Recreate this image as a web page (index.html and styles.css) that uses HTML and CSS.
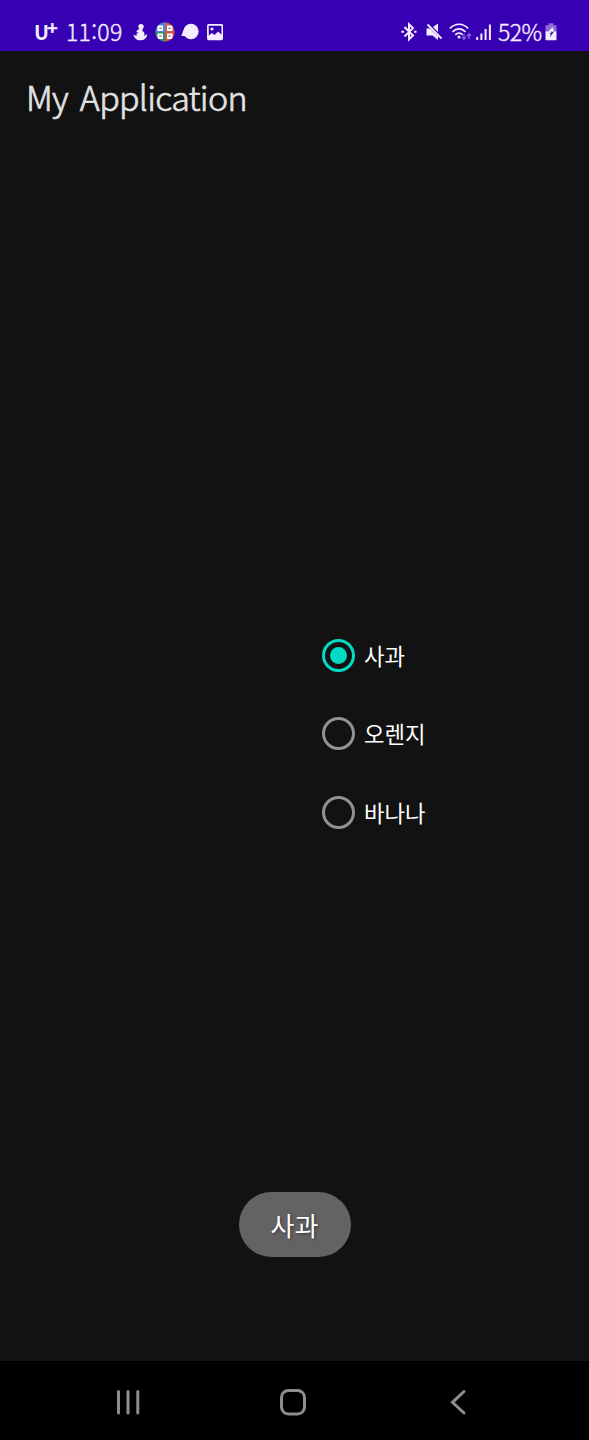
FILE: index.html
```html
<!DOCTYPE html>
<html lang="ko">
<head>
  <meta charset="UTF-8" />
  <title>My Application</title>
  <meta name="viewport" content="width=device-width, initial-scale=1.0" />
  <link rel="stylesheet" href="styles.css">
</head>
<body>
  <!-- 상태 표시줄 -->
  <div class="status-bar">
    <div class="status-left">
      <span class="carrier">U<sup>+</sup></span>
      <span class="clock">11:09</span>
      <svg class="icon-person" width="15" height="20" viewBox="0 0 15 20" fill="#f3edff">
        <circle cx="8" cy="4.600" r="2.700" />
        <path d="M4.500 8 L7 6.500 H9.800 L9.300 9 C11.800 10 12 12.500 11 14 L14.300 12 C13.800 16.500 11 18.300 7.500 18.300 C4 18.300 1.200 16.500 0.500 12.500 L3.500 14 C3.300 12 4 11 5.700 10.200 L3 10.200 Z" />
      </svg>
      <svg class="icon-grid" width="20" height="20" viewBox="0 0 20 20">
        <clipPath id="round"><circle cx="10" cy="10" r="9.700" /></clipPath>
        <g clip-path="url(#round)">
          <path fill="#4c86dc" d="M0 0h10v10H0z" />
          <path fill="#c75a5a" d="M10 0h10v10H10z" />
          <path fill="#27966e" d="M0 10h10v10H0z" />
          <path fill="#d84f3c" d="M10 10h10v10H10z" />
          <path fill="#fff" d="M2.500 3.500H8v5.500H2.500zM12 3.500h5.500v5.500H12zM2.500 11.500H8V17H2.500zM12 11.500h5.500V17H12z" />
          <path stroke="#446" stroke-width="1" d="M4.500 6.300h2M13.500 6.300h2M4.500 14h2M13.500 14h2" />
        </g>
      </svg>
      <svg class="icon-bubble" width="18" height="20" viewBox="0 0 18 20" fill="#f3edff">
        <circle cx="10" cy="9.500" r="7.700" />
        <path d="M3 7L0.300 13.800L6 14.500z" />
      </svg>
      <svg class="icon-picture" width="16" height="20" viewBox="0 0 16 20">
        <rect x="0.900" y="2.900" width="14.400" height="14.400" rx="0.800" fill="none" stroke="#f3edff" stroke-width="1.700" />
        <circle cx="5" cy="7" r="1.600" fill="#f3edff" />
        <path d="M1 14L5 11L7.500 13L11 9.500L15 13V17H1z" fill="#f3edff" />
      </svg>
    </div>
    <div class="status-right">
      <svg class="icon-bluetooth" width="16" height="20" viewBox="0 0 16 20" fill="none" stroke="#f3edff" stroke-width="2">
        <path d="M3.500 5L12 13.500L8 17.300V2.300L12 6.100L3.500 14.500" />
        <path d="M0.400 9.800H3M13 9.800H15.500" />
      </svg>
      <svg class="icon-mute" width="17" height="20" viewBox="0 0 17 20" fill="#f3edff">
        <path d="M0.500 6.500H4L12 14.500V18L6.500 13.500H0.500z" />
        <path d="M7 5L12 1.500V10z" />
        <path d="M1.500 2.500L15.500 16.500" stroke="#f3edff" stroke-width="1.800" />
      </svg>
      <svg class="icon-wifi" width="23" height="20" viewBox="0 0 23 20" fill="none" stroke="#f3edff" stroke-width="1.700">
        <path d="M0.800 6.500C6 0.800 14 0.800 19.200 6.500" />
        <path d="M3.500 9.800C7.300 5.800 12.700 5.800 16.500 9.800" />
        <path d="M6.300 12.800C8.500 10.500 11.500 10.500 13.700 12.800" />
        <circle cx="10" cy="15" r="1.500" fill="#f3edff" stroke="none" />
        <path d="M15 12V17M13 15L15 17.200L17 15M20 17V12M18 14L20 11.800L22 14" stroke="#8562da" stroke-width="1.400" />
      </svg>
      <svg class="icon-signal" width="16" height="20" viewBox="0 0 16 20" fill="#f3edff">
        <path d="M0.200 15h2v3h-2zM4.400 11.500h2V18h-2zM8.600 7h2v11h-2zM12.900 2.500h2V18h-2z" />
      </svg>
      <span class="percent">52%</span>
      <svg class="icon-battery" width="12" height="20" viewBox="0 0 12 20">
        <path d="M3.500 1.300h5v2h3V10H0.500V3.300h3z" fill="#8d6bd8" />
        <path d="M0.500 9.500H11.500V17.500Q11.500 18.300 10.700 18.300H1.300Q0.500 18.300 0.500 17.500z" fill="#f3edff" />
        <path d="M7.500 5L3 10.500H5.300V9L9 9.500z" fill="#fff" />
        <path d="M9 9.500L4.800 15.500L6 11.500H3.500" fill="#21105c" />
      </svg>
    </div>
  </div>

  <!-- 앱 화면 -->
  <div class="app">
    <h1 class="app-title">My Application</h1>
    <div class="radio-group">
      <div class="radio checked"><span class="radio-button"></span><span class="radio-label">사과</span></div>
      <div class="radio"><span class="radio-button"></span><span class="radio-label">오렌지</span></div>
      <div class="radio"><span class="radio-button"></span><span class="radio-label">바나나</span></div>
    </div>
    <div class="toast">사과</div>
  </div>

  <!-- 내비게이션 바 -->
  <div class="nav-bar">
    <svg width="28" height="28" viewBox="0 0 28 28" stroke="#8e8e8e" stroke-width="3" stroke-linecap="round">
      <path d="M4.500 3.500V25M14 3.500V25M23.800 3.500V25" />
    </svg>
    <svg width="28" height="28" viewBox="0 0 28 28" fill="none" stroke="#8e8e8e" stroke-width="3">
      <rect x="2.500" y="2.500" width="23" height="23.500" rx="7" />
    </svg>
    <svg width="28" height="28" viewBox="0 0 28 28" fill="none" stroke="#8e8e8e" stroke-width="3" stroke-linecap="round" stroke-linejoin="miter">
      <path d="M20 3.500L8.500 14.300L20 25" />
    </svg>
  </div>
</body>
</html>
```
FILE: styles.css
```css
body {
  margin: 0;
  height: 1440px;
  display: flex;
  flex-direction: column;
  background-color: #121212;
  color: #fff;
  font-family: "Noto Sans CJK KR", "Noto Sans", sans-serif;
  overflow: hidden;
}

svg {
  display: block;
  flex: none;
}

/* 상태 표시줄 */
.status-bar {
  height: 51px;
  box-sizing: border-box;
  padding: 13px 32px 0 34px;
  display: flex;
  justify-content: space-between;
  background-color: #3700b3;
  color: #f3edff;
}

.status-left,
.status-right {
  height: 38px;
  display: flex;
  align-items: center;
}

.carrier {
  width: 32px;
  font-size: 20px;
  font-weight: 700;
  line-height: 38px;
  white-space: nowrap;
}

.carrier sup {
  margin-left: -2px;
  font-size: 18px;
  line-height: 0;
  vertical-align: 5px;
  -webkit-text-stroke: 0.4px #f3edff;
}

.clock,
.percent {
  font-size: 23px;
  font-weight: 300;
  line-height: 37px;
  padding-bottom: 1px;
  white-space: nowrap;
  -webkit-text-stroke: 0.4px #f3edff;
}

.clock {
  width: 67px;
  letter-spacing: 0.3px;
}

.percent {
  width: 47px;
  padding-left: 1px;
  letter-spacing: -0.6px;
}

.icon-person {
  margin-right: 7px;
}

.icon-grid {
  margin-right: 6px;
}

.icon-bubble {
  margin-right: 8px;
}

.icon-bluetooth {
  margin-right: 9px;
}

.icon-mute {
  margin-right: 6px;
}

.icon-wifi {
  margin-right: 4px;
}

.icon-signal {
  margin-right: 5px;
}

/* 앱 화면 */
.app {
  flex: 1;
  display: flex;
  flex-direction: column;
}

.app-title {
  margin: 0;
  padding: 0 0 3px 26px;
  height: 92px;
  font-size: 34px;
  font-weight: 300;
  line-height: 92px;
  letter-spacing: -0.7px;
  word-spacing: 3px;
  color: #e2e2e2;
  -webkit-text-stroke: 0.7px #e2e2e2;
}

.radio-group {
  margin: 470px 0 0 322px;
  display: flex;
  flex-direction: column;
}

.radio {
  height: 78.6px;
  display: flex;
  align-items: center;
  gap: 9px;
  font-size: 22.3px;
}

.radio-label {
  padding-bottom: 1px;
}

.radio-button {
  width: 33px;
  height: 33px;
  box-sizing: border-box;
  border: 3px solid #929292;
  border-radius: 50%;
  display: flex;
  align-items: center;
  justify-content: center;
}

.radio.checked .radio-button {
  border-color: #03dac5;
}

.radio.checked .radio-button::after {
  content: "";
  width: 17px;
  height: 17px;
  border-radius: 50%;
  background-color: #03dac5;
}

.toast {
  margin: auto auto 104px;
  width: 112px;
  height: 65px;
  border-radius: 33px;
  background-color: #636363;
  font-size: 26px;
  line-height: 65px;
  text-align: center;
  text-shadow: 1px 1px 3px rgba(0, 0, 0, 0.5);
}

/* 내비게이션 바 */
.nav-bar {
  height: 79px;
  box-sizing: border-box;
  padding: 3px 117px 0 114px;
  display: flex;
  justify-content: space-between;
  align-items: center;
  background-color: #000;
}
```
